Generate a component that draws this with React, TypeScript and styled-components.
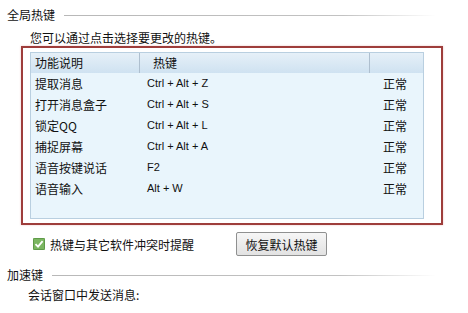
import styled, { createGlobalStyle } from "styled-components";

const GlobalStyle = createGlobalStyle`
  html, body {
    margin: 0;
    padding: 0;
    background: #ffffff;
  }
  body {
    font-family: "Noto Sans CJK SC", "Liberation Sans", sans-serif;
    font-size: 12px;
    color: #111;
  }
`;

const Page = styled.div`
  width: 468px;
  height: 313px;
  overflow: hidden;
  background: #fff;
`;

const SectionHeader = styled.div<{ h: number; top?: number }>`
  display: flex;
  align-items: center;
  height: ${(p) => p.h}px;
  margin-top: ${(p) => p.top ?? 0}px;
  padding-left: 7px;
  padding-right: 32px;
  font-size: 12px;
  line-height: 16px;
`;

const Rule = styled.div`
  flex: 1;
  height: 1px;
  margin-left: 9px;
  background: linear-gradient(to right, #b8b8b8, #c2c2c2 75%, rgba(220, 220, 220, 0));
`;

const Hint = styled.div`
  height: 16px;
  line-height: 16px;
  padding-left: 30px;
`;

const Highlight = styled.div`
  margin-left: 21px;
  width: 422px;
  height: 179px;
  box-sizing: border-box;
  border: 2px solid #9e3d3b;
  box-shadow: 0 0 2px rgba(200, 90, 90, 0.35);
  padding: 4px 17px 4px 7px;
  display: flex;
`;

const List = styled.div`
  flex: 1;
  box-sizing: border-box;
  border: 1px solid #b9cfe0;
  background: #e9f5fc;
  display: flex;
  flex-direction: column;
`;

const Cols = "108px 230px 1fr";

const Head = styled.div`
  display: grid;
  grid-template-columns: ${Cols};
  height: 20px;
  background: linear-gradient(to bottom, #e6f0f8, #cfe2f1);
  align-items: center;
`;

const HeadCell = styled.div<{ pad: number; divider?: boolean }>`
  padding-left: ${(p) => p.pad}px;
  height: 20px;
  line-height: 20px;
  border-left: ${(p) => (p.divider ? "1px solid #aebfcf" : "none")};
`;

const Row = styled.div`
  display: grid;
  grid-template-columns: ${Cols};
  height: 21px;
  line-height: 21px;
`;

const Cell = styled.div<{ pad: number; latin?: boolean }>`
  padding-left: ${(p) => p.pad}px;
  font-family: ${(p) =>
    p.latin ? '"Liberation Sans", sans-serif' : '"Noto Sans CJK SC", sans-serif'};
  font-size: ${(p) => (p.latin ? "11px" : "12px")};
`;

const Actions = styled.div`
  display: flex;
  align-items: center;
  height: 24px;
  margin-top: 7px;
  padding-left: 33px;
`;

const Check = styled.label`
  display: flex;
  align-items: center;
  gap: 5px;
  width: 203px;
`;

const Button = styled.button`
  width: 91px;
  height: 24px;
  box-sizing: border-box;
  border: 1px solid #8f9090;
  border-radius: 2px;
  background: linear-gradient(to bottom, #f6f6f6, #e2e2e2);
  font-family: "Noto Sans CJK SC", sans-serif;
  font-size: 12px;
  color: #111;
  padding: 0;
`;

const Sub = styled.div`
  height: 18px;
  line-height: 18px;
  padding-left: 28px;
`;

const CheckBox = () => (
  <svg width="12" height="12" viewBox="0 0 12 12">
    <rect x="0" y="0" width="12" height="12" rx="1" fill="#7bb661" />
    <rect x="0.5" y="0.5" width="11" height="11" rx="1" fill="none" stroke="#5f9a49" />
    <path d="M2.5 6.2 L5 8.6 L9.6 3.2" stroke="#fff" strokeWidth="1.8" fill="none" />
  </svg>
);

const hotkeys = [
  { name: "提取消息", key: "Ctrl + Alt + Z" },
  { name: "打开消息盒子", key: "Ctrl + Alt + S" },
  { name: "锁定QQ", key: "Ctrl + Alt + L" },
  { name: "捕捉屏幕", key: "Ctrl + Alt + A" },
  { name: "语音按键说话", key: "F2" },
  { name: "语音输入", key: "Alt + W" },
];

export default function App() {
  return (
    <Page>
      <GlobalStyle />
      <SectionHeader h={30}>
        全局热键
        <Rule />
      </SectionHeader>
      <Hint>您可以通过点击选择要更改的热键。</Hint>
      <Highlight>
        <List>
          <Head>
            <HeadCell pad={4}>功能说明</HeadCell>
            <HeadCell pad={13} divider>
              热键
            </HeadCell>
            <HeadCell pad={13} divider />
          </Head>
          {hotkeys.map((h) => (
            <Row key={h.name}>
              <Cell pad={4}>{h.name}</Cell>
              <Cell pad={8} latin>
                {h.key}
              </Cell>
              <Cell pad={14}>正常</Cell>
            </Row>
          ))}
        </List>
      </Highlight>
      <Actions>
        <Check>
          <CheckBox />
          热键与其它软件冲突时提醒
        </Check>
        <Button>恢复默认热键</Button>
      </Actions>
      <SectionHeader h={22} top={8}>
        加速键
        <Rule />
      </SectionHeader>
      <Sub>会话窗口中发送消息:</Sub>
    </Page>
  );
}
